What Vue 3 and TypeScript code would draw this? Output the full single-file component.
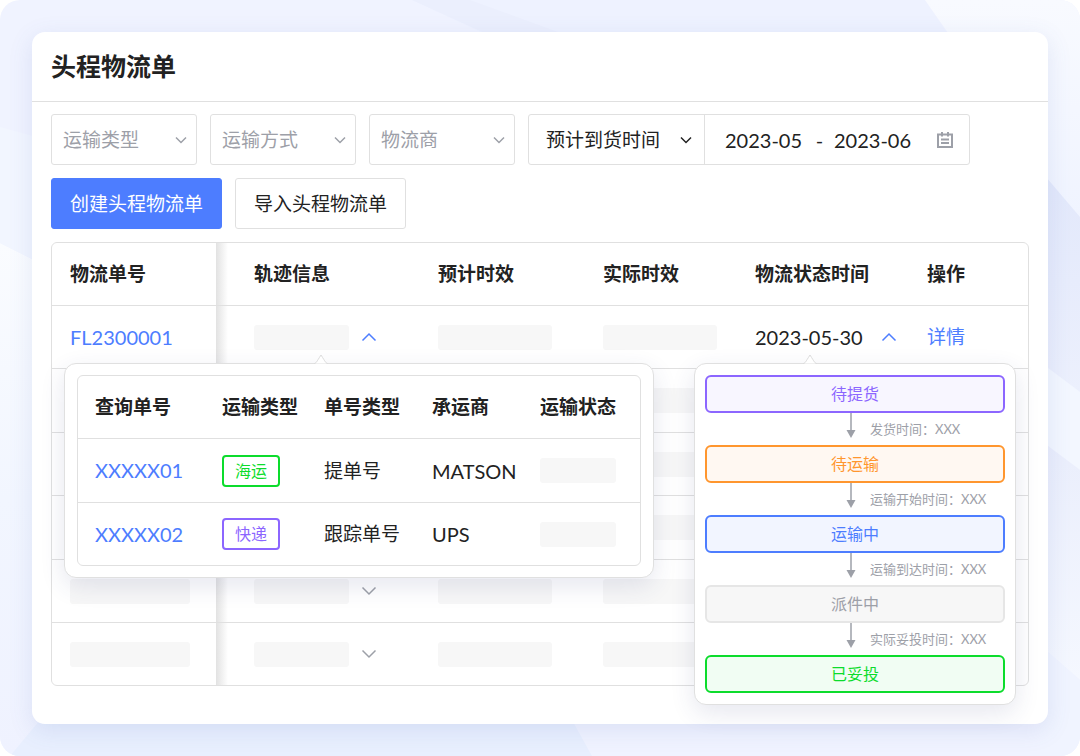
<script setup lang="ts">
import { ref } from 'vue'

interface Column {
  key: string
  label: string
}

interface Tracking {
  code: string
  mode: string
  tone: string
  kind: string
  carrier: string
}

interface Step {
  label: string
  tone: string
  next?: string
}

const filters = [
  { id: 'type', placeholder: '运输类型' },
  { id: 'method', placeholder: '运输方式' },
  { id: 'vendor', placeholder: '物流商' },
]

const dateFrom = ref('2023-05')
const dateTo = ref('2023-06')

const columns: Column[] = [
  { key: 'order', label: '物流单号' },
  { key: 'track', label: '轨迹信息' },
  { key: 'eta', label: '预计时效' },
  { key: 'actual', label: '实际时效' },
  { key: 'status', label: '物流状态时间' },
  { key: 'action', label: '操作' },
]

const trackColumns: Column[] = [
  { key: 'code', label: '查询单号' },
  { key: 'mode', label: '运输类型' },
  { key: 'kind', label: '单号类型' },
  { key: 'carrier', label: '承运商' },
  { key: 'state', label: '运输状态' },
]

const trackings: Tracking[] = [
  { code: 'XXXXX01', mode: '海运', tone: 'green', kind: '提单号', carrier: 'MATSON' },
  { code: 'XXXXX02', mode: '快递', tone: 'purple', kind: '跟踪单号', carrier: 'UPS' },
]

const steps: Step[] = [
  { label: '待提货', tone: 'purple', next: '发货时间：XXX' },
  { label: '待运输', tone: 'orange', next: '运输开始时间：XXX' },
  { label: '运输中', tone: 'blue', next: '运输到达时间：XXX' },
  { label: '派件中', tone: 'gray', next: '实际妥投时间：XXX' },
  { label: '已妥投', tone: 'green' },
]
</script>

<template>
  <div class="page">
    <svg class="backdrop" viewBox="0 0 1080 756" preserveAspectRatio="none" aria-hidden="true">
      <defs>
        <linearGradient id="left" x1="0" y1="0" x2="0" y2="1">
          <stop offset="0" stop-color="#fafcff" />
          <stop offset="0.5" stop-color="#f2f6ff" />
          <stop offset="1" stop-color="#eff2ff" />
        </linearGradient>
        <linearGradient id="corner" x1="0" y1="0" x2="0" y2="1">
          <stop offset="0" stop-color="#f8faff" />
          <stop offset="1" stop-color="#f0f4ff" />
        </linearGradient>
        <linearGradient id="band" x1="0" y1="0" x2="0" y2="1">
          <stop offset="0" stop-color="#e2e8fb" />
          <stop offset="1" stop-color="#ecf0fd" />
        </linearGradient>
        <linearGradient id="fade" x1="0" y1="0" x2="0" y2="1">
          <stop offset="0" stop-color="#eaeefc" />
          <stop offset="1" stop-color="#f5f8ff" />
        </linearGradient>
      </defs>
      <rect width="1080" height="756" fill="#f0f3ff" />
      <path d="M0 243L40 263V756H0Z" fill="url(#left)" />
      <path d="M0 127L40 138V263L0 243Z" fill="#f2f6ff" />
      <path d="M412 0H925L965 60H540Z" fill="#eef2ff" />
      <path d="M412 0H470L580 40H500Z" fill="#ebeffd" />
      <path d="M925 0H1080V217L1040 170L960 50Z" fill="url(#corner)" />
      <path d="M1040 170L1080 217V392L1040 362Z" fill="url(#band)" />
      <path d="M1040 362L1080 392V470L1040 440Z" fill="#f3f7ff" />
      <path d="M1040 440L1080 470V680L1040 645Z" fill="url(#fade)" />
      <path d="M1040 645L1080 680V756H1040Z" fill="#f0f4ff" />
      <path d="M40 720H572L592 756H10Z" fill="#e8effe" />
    </svg>

    <main class="card">
      <header class="card-head">
        <h1>头程物流单</h1>
      </header>

      <div class="card-body">
        <form class="filters" @submit.prevent>
          <div v-for="f in filters" :key="f.id" class="select-box">
            <select :id="f.id" :aria-label="f.placeholder">
              <option>{{ f.placeholder }}</option>
            </select>
            <svg class="chevron" viewBox="0 0 12 8" aria-hidden="true"><path d="M1 1.5L6 6.5L11 1.5" /></svg>
          </div>
          <div class="date-group">
            <div class="date-kind">
              <select aria-label="时间类型">
                <option>预计到货时间</option>
              </select>
              <svg class="chevron" viewBox="0 0 12 8" aria-hidden="true"><path d="M1 1.5L6 6.5L11 1.5" /></svg>
            </div>
            <div class="date-range">
              <input v-model="dateFrom" type="text" aria-label="开始月份" />
              <span class="dash">-</span>
              <input v-model="dateTo" type="text" aria-label="结束月份" />
              <svg class="calendar" viewBox="0 0 16 16" aria-hidden="true">
                <path d="M1 2.5H15V15H1ZM5 0V4.5M11 0V4.5M4 7.5H12M4 11H12" />
              </svg>
            </div>
          </div>
        </form>

        <div class="actions">
          <button type="button" class="btn primary">创建头程物流单</button>
          <button type="button" class="btn">导入头程物流单</button>
        </div>

        <div class="table-area">
          <div class="table-frame">
            <table class="orders">
              <thead>
                <tr>
                  <th v-for="c in columns" :key="c.key" :class="c.key" scope="col">{{ c.label }}</th>
                </tr>
              </thead>
              <tbody>
                <tr>
                  <td class="order"><a class="latin" href="#">FL2300001</a></td>
                  <td class="track">
                    <div class="cell">
                      <span class="bar w95"></span>
                      <button type="button" class="toggle open" aria-label="收起轨迹">
                        <svg viewBox="0 0 16 10" aria-hidden="true"><path d="M1.5 8.5L8 2L14.5 8.5" /></svg>
                      </button>
                    </div>
                  </td>
                  <td class="eta"><div class="cell"><span class="bar w114"></span></div></td>
                  <td class="actual"><div class="cell"><span class="bar w114"></span></div></td>
                  <td class="status">
                    <div class="cell wide">
                      <span class="latin">2023-05-30</span>
                      <button type="button" class="toggle open" aria-label="收起状态">
                        <svg viewBox="0 0 16 10" aria-hidden="true"><path d="M1.5 8.5L8 2L14.5 8.5" /></svg>
                      </button>
                    </div>
                  </td>
                  <td class="action"><a href="#">详情</a></td>
                </tr>
                <tr v-for="n in 5" :key="n">
                  <td class="order"><div class="cell"><span class="bar w120"></span></div></td>
                  <td class="track">
                    <div class="cell">
                      <span class="bar w95"></span>
                      <button type="button" class="toggle" aria-label="展开轨迹">
                        <svg viewBox="0 0 16 10" aria-hidden="true"><path d="M1.5 1.5L8 8L14.5 1.5" /></svg>
                      </button>
                    </div>
                  </td>
                  <td class="eta"><div class="cell"><span class="bar w114"></span></div></td>
                  <td class="actual"><div class="cell"><span class="bar w114"></span></div></td>
                  <td class="status"><div class="cell"><span class="bar w114"></span></div></td>
                  <td class="action"></td>
                </tr>
              </tbody>
            </table>
          </div>

          <section class="popover tracking" aria-label="轨迹信息">
            <svg class="pointer" viewBox="0 0 14 10" aria-hidden="true"><path d="M0 9.5C2 9.5 2.5 8 7 1C11.5 8 12 9.5 14 9.5" /></svg>
            <div class="table-frame">
              <table class="details">
                <thead>
                  <tr>
                    <th v-for="c in trackColumns" :key="c.key" :class="c.key" scope="col">{{ c.label }}</th>
                  </tr>
                </thead>
                <tbody>
                  <tr v-for="t in trackings" :key="t.code">
                    <td><a class="latin" href="#">{{ t.code }}</a></td>
                    <td><span class="tag" :class="t.tone">{{ t.mode }}</span></td>
                    <td>{{ t.kind }}</td>
                    <td class="latin">{{ t.carrier }}</td>
                    <td><div class="cell"><span class="bar w76"></span></div></td>
                  </tr>
                </tbody>
              </table>
            </div>
          </section>

          <section class="popover progress" aria-label="物流状态">
            <svg class="pointer" viewBox="0 0 14 10" aria-hidden="true"><path d="M0 9.5C2 9.5 2.5 8 7 1C11.5 8 12 9.5 14 9.5" /></svg>
            <ol>
              <li v-for="s in steps" :key="s.label">
                <div class="step" :class="s.tone">{{ s.label }}</div>
                <div v-if="s.next" class="link">
                  <svg viewBox="0 0 10 25" aria-hidden="true">
                    <path class="stem" d="M5 0V18" />
                    <path class="head" d="M0.5 17H9.5L5 25Z" />
                  </svg>
                  <span>{{ s.next }}</span>
                </div>
              </li>
            </ol>
          </section>
        </div>
      </div>
    </main>
  </div>
</template>

<style>
body {
  margin: 0;
  background: #fff;
}
</style>

<style scoped>
.page {
  --line: #e0e0e0;
  --ink: #222;
  --muted: #9da0a8;
  --blue: #4d7dff;
  --green: #0cdc2c;
  --purple: #8c66ff;
  --orange: #ff962e;
  position: relative;
  display: flex;
  box-sizing: border-box;
  min-height: 100vh;
  padding: 32px;
  overflow: hidden;
  border-radius: 20px;
  font-family: Lato, "Noto Sans CJK SC", sans-serif;
  font-size: 19px;
  line-height: 28px;
  color: var(--ink);
}

.page * {
  box-sizing: border-box;
}

.backdrop {
  position: absolute;
  inset: 0;
  width: 100%;
  height: 100%;
}

.card {
  position: relative;
  flex: 1;
  min-width: 0;
  border-radius: 13px;
  background: #fff;
  box-shadow: 0 6px 24px rgba(80, 100, 180, 0.13);
}

.card-head {
  padding: 17px 19px;
  border-bottom: 1px solid var(--line);
}

h1 {
  margin: 0;
  font-size: 25px;
  font-weight: 700;
  line-height: 35px;
}

.card-body {
  display: flex;
  flex-direction: column;
  gap: 13px;
  padding: 12px 19px 38px;
}

.filters,
.actions {
  display: flex;
  gap: 13px;
}

select,
input,
button {
  margin: 0;
  font: inherit;
  color: inherit;
}

select {
  width: 100%;
  height: 100%;
  padding: 0 30px 0 11px;
  border: 0;
  outline: 0;
  background: transparent;
  appearance: none;
}

.select-box {
  position: relative;
  width: 146px;
  height: 51px;
  border: 1px solid var(--line);
  border-radius: 3px;
  color: var(--muted);
}

.chevron {
  position: absolute;
  top: 50%;
  right: 9px;
  width: 12px;
  height: 8px;
  margin-top: -4px;
  pointer-events: none;
}

.chevron path,
.toggle path,
.calendar path {
  fill: none;
  stroke: currentColor;
  stroke-width: 1.5;
}

.date-group {
  display: flex;
  height: 51px;
  border: 1px solid var(--line);
  border-radius: 3px;
}

.date-kind {
  position: relative;
  width: 176px;
  border-right: 1px solid var(--line);
}

.date-kind select {
  padding-left: 17px;
}

.date-kind .chevron {
  right: 12px;
}

.date-range {
  display: flex;
  align-items: center;
  padding: 0 16px 0 20px;
  font-size: 20px;
}

.date-range input {
  width: 80px;
  padding: 0;
  border: 0;
  outline: 0;
  background: transparent;
}

.dash {
  width: 29px;
  text-align: center;
}

.calendar {
  width: 16px;
  height: 16px;
  margin-left: 23px;
  color: var(--muted);
}

.calendar path {
  stroke-width: 2;
}

.btn {
  height: 51px;
  padding: 0 18px;
  border: 1px solid var(--line);
  border-radius: 3px;
  background: #fff;
}

.btn.primary {
  border-color: var(--blue);
  background: var(--blue);
  color: #fff;
}

.table-area {
  position: relative;
}

.table-frame {
  overflow: hidden;
  border: 1px solid var(--line);
  border-radius: 6px;
}

table {
  width: 100%;
  border-spacing: 0;
  table-layout: fixed;
}

th,
td {
  padding: 0 0 0 18px;
  text-align: left;
  white-space: nowrap;
}

th {
  height: 62px;
  font-weight: 700;
}

td {
  height: 63px;
  border-top: 1px solid var(--line);
}

.orders tr:nth-child(2) td,
.orders tr:nth-child(4) td,
.details tr:nth-child(1) td {
  height: 64px;
}

.details th,
.details td {
  padding-left: 17px;
}

.latin {
  font-size: 20px;
}

a {
  color: var(--blue);
  text-decoration: none;
}

.order { width: 164px; }
.track { width: 204px; }
.eta { width: 165px; }
.actual { width: 152px; }
.status { width: 172px; }
.action { width: 119px; }
.code { width: 127px; }
.mode { width: 102px; }
.kind { width: 108px; }
.carrier { width: 108px; }
.state { width: 117px; }

.orders .track {
  padding-left: 38px;
  background: linear-gradient(90deg, #e2e2e2 0, #fff 12px);
}

.cell {
  display: flex;
  align-items: center;
  gap: 12px;
}

.cell.wide {
  gap: 18px;
}

.bar {
  height: 25px;
  border-radius: 3px;
  background: #f7f7f7;
}

.w76 { width: 76px; }
.w95 { width: 95px; }
.w114 { width: 114px; }
.w120 { width: 120px; }

.toggle {
  display: flex;
  padding: 0;
  border: 0;
  background: none;
  color: var(--muted);
}

.toggle.open {
  color: var(--blue);
}

.toggle svg {
  width: 16px;
  height: 10px;
}

.popover {
  position: absolute;
  top: 121px;
  border: 1px solid var(--line);
  border-radius: 12px;
  background: #fff;
  box-shadow: 0 8px 24px rgba(50, 60, 120, 0.12);
}

.tracking {
  left: 13px;
  width: 590px;
  padding: 11px 12px;
}

.progress {
  right: 13px;
  width: 322px;
  padding: 11px 10px;
}

.pointer {
  position: absolute;
  top: -10px;
  width: 14px;
  height: 10px;
}

.pointer path {
  fill: #fff;
  stroke: #dcdcdc;
}

.tracking .pointer {
  left: 249px;
}

.progress .pointer {
  left: 108px;
}

.tag {
  display: inline-block;
  padding: 0 11px;
  border: 2px solid currentColor;
  border-radius: 4px;
  font-size: 16px;
  line-height: 28px;
  vertical-align: middle;
}

.green { color: var(--green); }
.purple { color: var(--purple); }
.orange { color: var(--orange); }
.blue { color: var(--blue); }
.gray { color: var(--muted); }

ol {
  margin: 0;
  padding: 0;
  list-style: none;
}

.step {
  border: 2px solid currentColor;
  border-radius: 6px;
  font-size: 16px;
  line-height: 34px;
  text-align: center;
}

.step.purple { background: #f8f6ff; }
.step.orange { background: #fff8f2; }
.step.blue { background: #f2f5ff; }
.step.gray { border-color: #e6e6e6; background: #f7f7f7; }
.step.green { background: #f1fdf3; }

.link {
  display: flex;
  gap: 14px;
  height: 32px;
  padding-left: 47%;
  font-size: 13px;
  line-height: 32px;
  color: var(--muted);
}

.link svg {
  width: 10px;
  height: 25px;
}

.stem {
  stroke: currentColor;
  stroke-width: 1.5;
}

.head {
  fill: currentColor;
}
</style>
